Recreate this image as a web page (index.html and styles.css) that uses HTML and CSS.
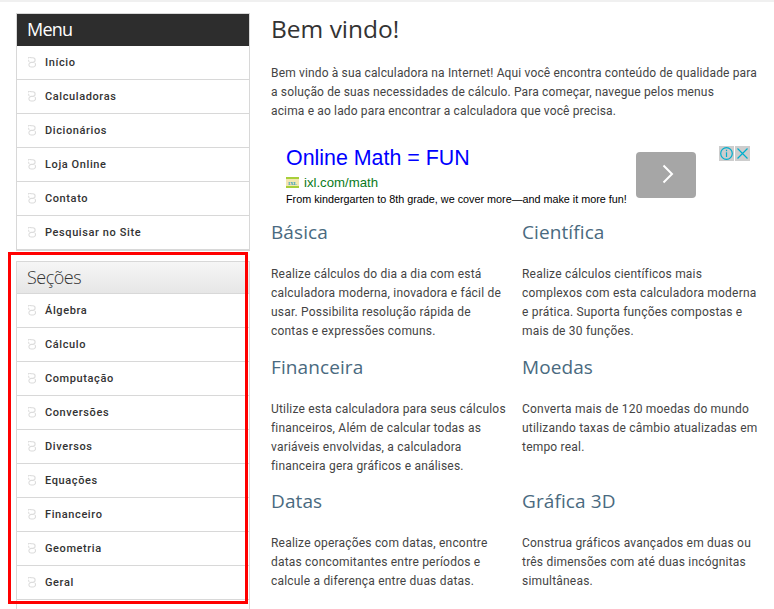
FILE: index.html
```html
<!DOCTYPE html>
<html lang="pt">
<head>
<meta charset="utf-8">
<title>Calculadora</title>
<link rel="stylesheet" href="styles.css">
</head>
<body>
<svg class="defs" aria-hidden="true"><symbol id="knot" viewBox="0 0 8 11"><path d="M1.5 4.4A2.1 2.1 0 1 1 3.2 .8H4.8A2.3 2.3 0 0 1 4.8 5.4H3.2A2.2 2.2 0 1 0 3.2 10H4.8A2.3 2.3 0 0 0 6.9 6.2"/></symbol></svg>
<div class="topline"></div>
<div class="page">
  <aside class="sidebar">
    <section class="panel">
      <h2 class="panel-title dark">Menu</h2>
      <ul class="nav">
        <li><svg class="knot"><use href="#knot"/></svg><a>Início</a></li>
        <li><svg class="knot"><use href="#knot"/></svg><a>Calculadoras</a></li>
        <li><svg class="knot"><use href="#knot"/></svg><a>Dicionários</a></li>
        <li><svg class="knot"><use href="#knot"/></svg><a>Loja Online</a></li>
        <li><svg class="knot"><use href="#knot"/></svg><a>Contato</a></li>
        <li><svg class="knot"><use href="#knot"/></svg><a>Pesquisar no Site</a></li>
      </ul>
    </section>
    <section class="panel second">
      <h2 class="panel-title light">Seções</h2>
      <ul class="nav">
        <li><svg class="knot"><use href="#knot"/></svg><a>Álgebra</a></li>
        <li><svg class="knot"><use href="#knot"/></svg><a>Cálculo</a></li>
        <li><svg class="knot"><use href="#knot"/></svg><a>Computação</a></li>
        <li><svg class="knot"><use href="#knot"/></svg><a>Conversões</a></li>
        <li><svg class="knot"><use href="#knot"/></svg><a>Diversos</a></li>
        <li><svg class="knot"><use href="#knot"/></svg><a>Equações</a></li>
        <li><svg class="knot"><use href="#knot"/></svg><a>Financeiro</a></li>
        <li><svg class="knot"><use href="#knot"/></svg><a>Geometria</a></li>
        <li><svg class="knot"><use href="#knot"/></svg><a>Geral</a></li>
      </ul>
    </section>
    <div class="highlight"></div>
  </aside>
  <main class="content">
    <h1 class="title">Bem vindo!</h1>
    <p class="intro">Bem vindo à sua calculadora na Internet! Aqui você encontra conteúdo de qualidade para a solução de suas necessidades de cálculo. Para começar, navegue pelos menus<br>acima e ao lado para encontrar a calculadora que você precisa.</p>
    <div class="ad">
      <div class="ad-text">
        <a class="ad-head">Online Math = FUN</a>
        <div class="ad-url"><svg class="ad-logo" viewBox="0 0 13 13"><rect width="13" height="13" fill="#fff"/><rect y="1" width="13" height="2" fill="#a8cf3a"/><rect y="10" width="13" height="2" fill="#a8cf3a"/><rect y="3" width="13" height="7" fill="#f3e7b0"/><text x="6.5" y="8.6" text-anchor="middle" class="ad-logo-text">IXL</text></svg><span>ixl.com/math</span></div>
        <div class="ad-desc">From kindergarten to 8th grade, we cover more—and make it more fun!</div>
      </div>
      <div class="ad-button"><svg viewBox="0 0 14 20" class="ad-chevron"><path d="M2.5 1.5l8.5 8.5-8.5 8.5"/></svg></div>
      <div class="ad-badges">
        <span class="badge"><svg viewBox="0 0 15 15"><circle cx="7.5" cy="7.5" r="5.8"/><path d="M7.5 6.3v4.7M7.5 3.8v1.5"/></svg></span>
        <span class="badge"><svg viewBox="0 0 15 15"><path d="M2.5 2.5l10 10M12.5 2.5l-10 10"/></svg></span>
      </div>
    </div>
    <div class="cards">
      <article class="card"><h3>Básica</h3><p>Realize cálculos do dia a dia com está calculadora moderna, inovadora e fácil de usar. Possibilita resolução rápida de contas e expressões comuns.</p></article>
      <article class="card"><h3>Científica</h3><p>Realize cálculos científicos mais complexos com esta calculadora moderna e prática. Suporta funções compostas e mais de 30 funções.</p></article>
      <article class="card"><h3>Financeira</h3><p>Utilize esta calculadora para seus cálculos financeiros, Além de calcular todas as variáveis envolvidas, a calculadora financeira gera gráficos e análises.</p></article>
      <article class="card"><h3>Moedas</h3><p>Converta mais de 120 moedas do mundo utilizando taxas de câmbio atualizadas em tempo real.</p></article>
      <article class="card"><h3>Datas</h3><p>Realize operações com datas, encontre datas concomitantes entre períodos e calcule a diferença entre duas datas.</p></article>
      <article class="card"><h3>Gráfica 3D</h3><p>Construa gráficos avançados em duas ou três dimensões com até duas incógnitas simultâneas.</p></article>
    </div>
  </main>
</div>
</body>
</html>
```
FILE: styles.css
```css
* { box-sizing: border-box; }
html, body { margin: 0; padding: 0; height: 609px; overflow: hidden; background: #fff; }
body { font-family: Roboto, "Liberation Sans", sans-serif; color: #333; }
.defs { display: none; }
.topline { height: 2px; background: #f0f0f0; }
.page { display: flex; align-items: flex-start; padding: 11px 0 0 16px; }
.sidebar { position: relative; width: 234px; flex: none; }
.panel { border: 1px solid #d8d8d8; border-top: 0; }
.second { margin-top: 10px; padding-bottom: 30px; }
.panel-title { margin: 0; height: 33px; padding-left: 10px; font: 400 18px/32px "Open Sans", sans-serif; letter-spacing: -.75px; }
.dark { background: #2d2d2d; color: #fff; border-top: 1px solid #d8d8d8; padding-left: 10px; line-height: 30px; }
.light { background: linear-gradient(#f6f6f6, #e6e6e6); color: #333; border-top: 1px solid #d8d8d8; border-bottom: 1px solid #d8d8d8; line-height: 30px; font-weight: 300; letter-spacing: -.5px; }
.nav { list-style: none; margin: 0; padding: 0; }
.nav li { display: flex; align-items: center; height: 34px; border-bottom: 1px solid #d8d8d8; padding-left: 11px; font-size: 11px; font-weight: 500; letter-spacing: .6px; color: #333; }
.knot { width: 8px; height: 11px; margin-right: 9px; fill: none; stroke: #dcdcdc; stroke-width: 1.1; }
.highlight { position: absolute; left: -8px; top: 239px; width: 240px; height: 352px; border: 3px solid #f00; }
.content { width: 492px; margin-left: 21px; }
.title { margin: 0; font: 400 24.5px/32px "Open Sans", sans-serif; color: #333; }
.intro { margin: 19px 0 0; font-size: 12px; line-height: 19px; letter-spacing: .15px; color: #444; }
.ad { position: relative; height: 80px; margin-top: 19px; }
.ad-text { padding: 7px 0 0 15px; font-family: "Liberation Sans", sans-serif; }
.ad-head { display: block; font-size: 21.4px; line-height: 23px; color: #00f; }
.ad-url { display: flex; align-items: center; margin-top: 5px; font-size: 13.2px; line-height: 15px; color: #0a7a1a; }
.ad-logo { width: 13px; height: 13px; margin-right: 5px; }
.ad-logo-text { font: 700 5px "Liberation Serif", serif; fill: #2f9bbf; }
.ad-desc { margin-top: 2px; font-size: 10.8px; line-height: 14px; color: #000; }
.ad-button { position: absolute; left: 365px; top: 12px; width: 60px; height: 46px; padding: 0 0 3px 3px; background: #a6a6a6; border-radius: 4px; display: flex; align-items: center; justify-content: center; }
.ad-chevron { width: 14px; height: 20px; fill: none; stroke: #fff; stroke-width: 2; }
.ad-badges { position: absolute; left: 448px; top: 6px; display: flex; gap: 1px; }
.badge { width: 15px; height: 15px; background: #cdcdcd; display: flex; }
.badge svg { width: 15px; height: 15px; fill: none; stroke: #00aecd; stroke-width: 1.2; }
.cards { display: grid; grid-template-columns: 251px 241px; grid-auto-rows: 134.5px; }
.card h3 { margin: 0; font: 400 19px/24px "Open Sans", sans-serif; color: #4a6a80; letter-spacing: .1px; }
.card p { width: 236px; margin: 21px 0 0; font-size: 12px; line-height: 19px; letter-spacing: .2px; color: #444; }
```
